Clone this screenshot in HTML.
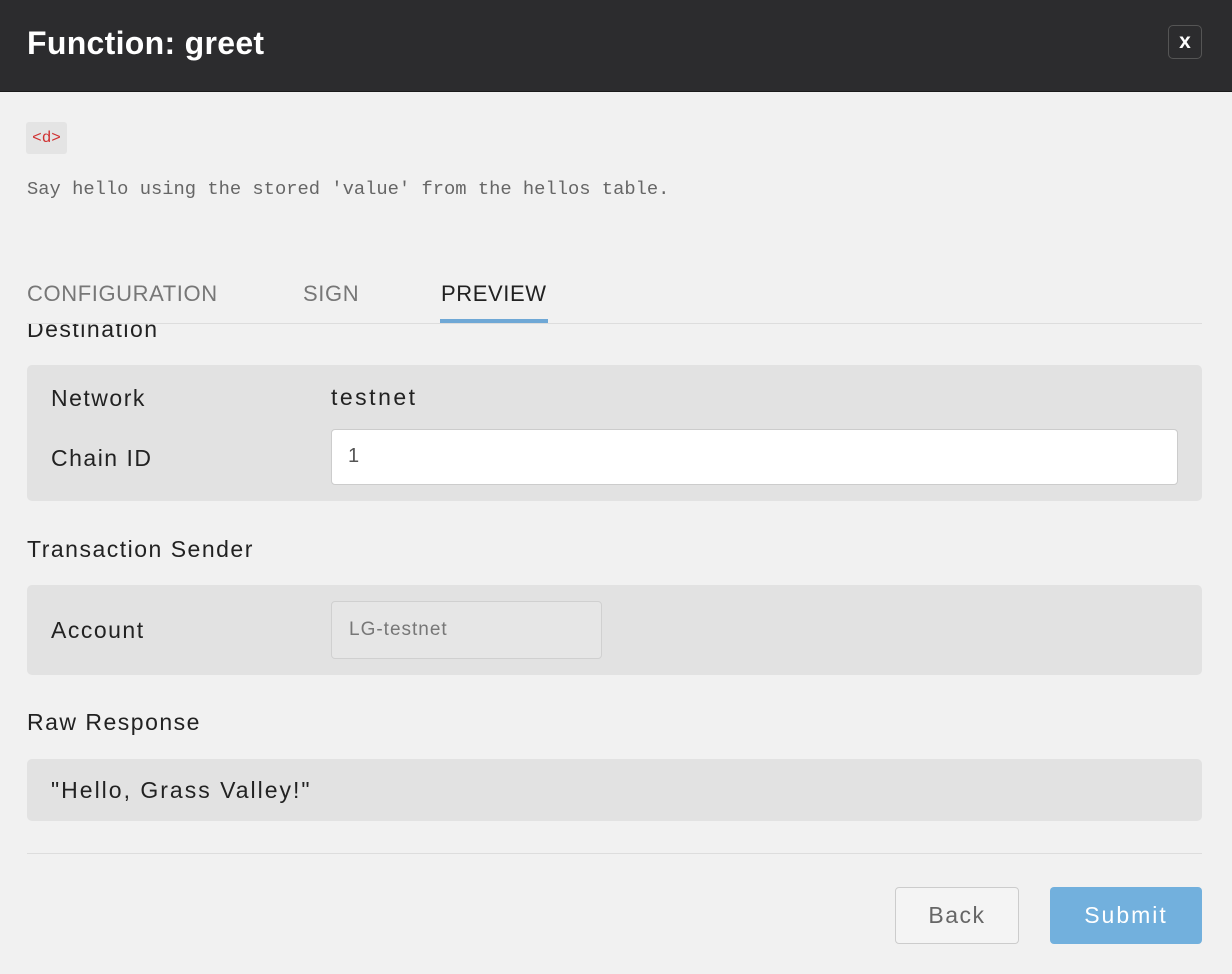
<!DOCTYPE html>
<html><head><style>
*{box-sizing:border-box;margin:0;padding:0}
body{width:1232px;height:974px;background:#f1f1f1;font-family:"Liberation Sans",sans-serif;position:relative;overflow:hidden;color:#222}
.hdr{position:absolute;left:0;top:0;width:1232px;height:92px;background:#2c2c2e;border-bottom:1px solid #1a1a1a}
.hdr h1{position:absolute;left:27px;top:25px;font-size:32px;font-weight:bold;color:#fff;letter-spacing:0.3px}
.x{position:absolute;left:1168px;top:25px;width:34px;height:34px;border:1px solid #555;border-radius:5px;color:#fff;font-weight:bold;font-size:21px;text-align:center;line-height:32px}
.tag{position:absolute;left:26px;top:122px;width:41px;height:32px;background:#e4e4e4;border-radius:3px;color:#d03030;font-family:"Liberation Mono",monospace;font-size:16px;text-align:center;line-height:32px}
.desc{position:absolute;left:27px;top:178px;font-family:"Liberation Mono",monospace;font-size:18.8px;color:#666}
.tab{position:absolute;top:281px;font-size:22px;color:#777;letter-spacing:0.6px}
.line{position:absolute;left:27px;width:1175px;height:1px;background:#ddd}
.lbl{position:absolute;left:27px;font-size:23px;color:#222;letter-spacing:1.5px}
.box{position:absolute;left:27px;width:1175px;background:#e2e2e2;border-radius:5px}
.k{position:absolute;left:24px;font-size:23px;color:#222;letter-spacing:1.5px}
</style></head><body>
<div class="hdr"><h1>Function: greet</h1><div class="x">x</div></div>
<div class="tag">&lt;d&gt;</div>
<div class="desc">Say hello using the stored 'value' from the hellos table.</div>
<div class="tab" style="left:27px">CONFIGURATION</div>
<div class="tab" style="left:303px">SIGN</div>
<div class="tab" style="left:441px;color:#222">PREVIEW</div>
<div style="position:absolute;left:440px;top:319px;width:108px;height:4px;background:#6fa8d6"></div>
<div class="line" style="top:323px"></div>
<div style="position:absolute;left:0;top:324px;width:1232px;height:18px;overflow:hidden"><div class="lbl" style="top:-8px">Destination</div></div>
<div class="box" style="top:365px;height:136px">
<div class="k" style="top:20px">Network</div>
<div style="position:absolute;left:304px;top:19px;font-size:23px;letter-spacing:2.5px">testnet</div>
<div class="k" style="top:80px">Chain ID</div>
<div style="position:absolute;left:304px;top:64px;width:847px;height:56px;background:#fff;border:1px solid #ccc;border-radius:4px;padding:15px 16px;font-size:20px;color:#555">1</div>
</div>
<div class="lbl" style="top:536px">Transaction Sender</div>
<div class="box" style="top:585px;height:90px">
<div class="k" style="top:32px">Account</div>
<div style="position:absolute;left:304px;top:16px;width:271px;height:58px;background:#e6e6e6;border:1px solid #d0d0d0;border-radius:4px;padding:17px 17px;font-size:19px;color:#777;letter-spacing:1px">LG-testnet</div>
</div>
<div class="lbl" style="top:709px">Raw Response</div>
<div class="box" style="top:759px;height:62px">
<div class="k" style="top:18px;letter-spacing:2px">"Hello, Grass Valley!"</div>
</div>
<div class="line" style="top:853px"></div>
<div style="position:absolute;left:895px;top:887px;width:124px;height:57px;border:1px solid #ccc;border-radius:4px;background:#f4f4f4;color:#666;font-size:23px;letter-spacing:1.5px;text-align:center;line-height:55px">Back</div>
<div style="position:absolute;left:1050px;top:887px;width:152px;height:57px;border-radius:4px;background:#72b0dd;color:#fff;font-size:23px;letter-spacing:2px;text-align:center;line-height:57px">Submit</div>
</body></html>
